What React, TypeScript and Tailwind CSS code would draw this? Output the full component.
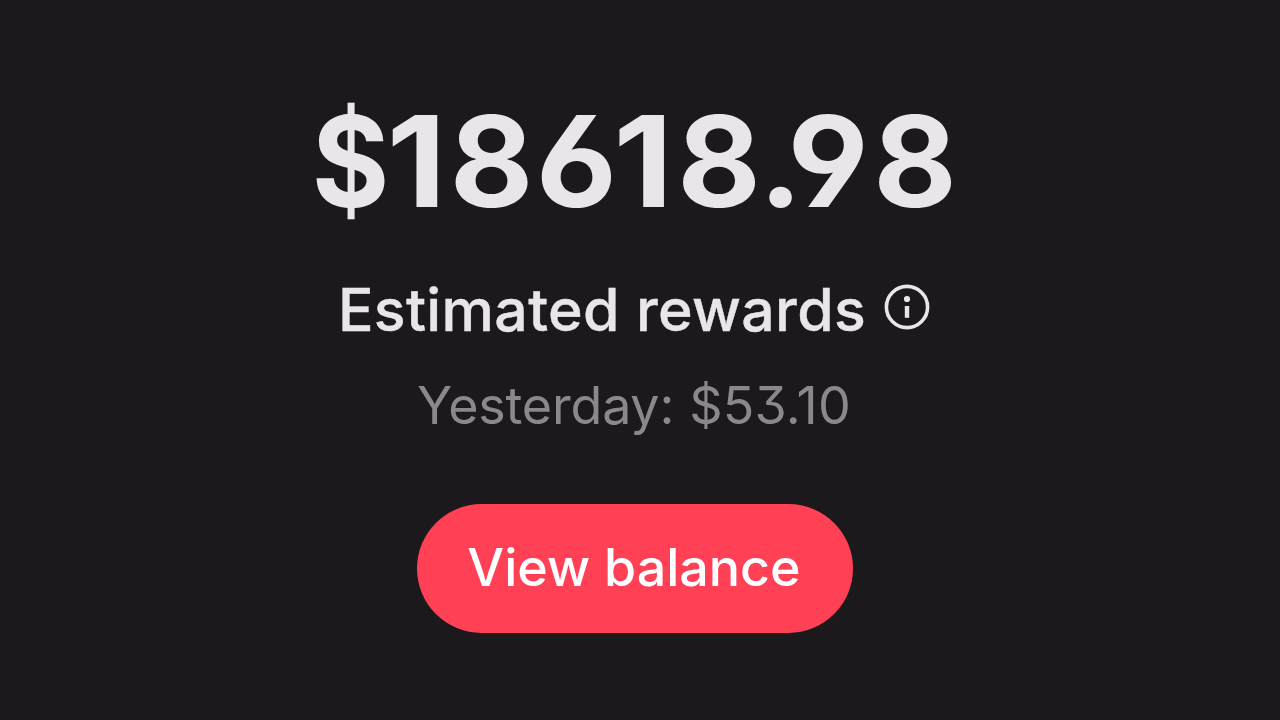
const digits = [
  { glyph: "$", cell: "w-[73px]", shape: "scale-x-[0.94]" },
  { glyph: "1", cell: "w-[59px]", shape: "scale-x-110" },
  { glyph: "8", cell: "w-[91px]", shape: "scale-x-[1.02]" },
  { glyph: "6", cell: "w-[79px]", shape: "scale-x-105" },
  { glyph: "1", cell: "w-[54px]", shape: "scale-x-110" },
  { glyph: "8", cell: "w-[98px]", shape: "scale-x-[1.02]" },
  { glyph: ".9", cell: "w-[97px]", shape: "-ml-[7px] mr-[5px] scale-x-105 tracking-[-8px]" },
  { glyph: "8", cell: "w-[104px]", shape: "scale-x-[1.02]" },
];

export default function App() {
  return (
    <main className="flex h-[720px] w-[1280px] flex-col items-center overflow-hidden bg-[#1b191c] pt-[88px] pr-[10px] font-['Inter',sans-serif]">
      <h1 className="ml-[10px] flex h-[145px] items-center whitespace-nowrap text-[126px] font-bold leading-none text-[#e9e6ea] [font-feature-settings:'cv03','cv04']">
        {digits.map(({ glyph, cell, shape }, i) => (
          <span key={i} className={`flex shrink-0 justify-center ${cell} ${shape}`}>
            {glyph}
          </span>
        ))}
      </h1>
      <div className="mt-[38px] -ml-[2px] flex h-[76px] items-center gap-[18px] text-[#e9e6ea]">
        <span className="whitespace-nowrap text-[59px] font-medium leading-none tracking-[0.35px] [-webkit-text-stroke:0.4px_currentColor]">
          Estimated rewards
        </span>
        <svg className="-mt-[5px] size-[46px]" viewBox="0 0 46 46" fill="none">
          <circle cx="23" cy="23" r="20.6" stroke="currentColor" strokeWidth="3.6" />
          <circle cx="23" cy="15" r="3.1" fill="currentColor" />
          <path d="M23 22v11.8" stroke="currentColor" strokeWidth="4.4" />
        </svg>
      </div>
      <p className="mt-[23px] -ml-[2px] flex h-[72px] items-center whitespace-nowrap text-[52px] leading-none text-[#8a888b] [font-feature-settings:'cv09']">
        <span className="tracking-[-0.2px]">Yesterday:</span>
        <span className="ml-[15px] tracking-[0.2px]">$53.10</span>
      </p>
      <button className="mt-[62px] flex h-[129px] w-[436px] shrink-0 items-center justify-center whitespace-nowrap rounded-full bg-[#ff4055] pr-[2px] pb-[2px] text-[52px] font-medium leading-none text-white">
        View balance
      </button>
    </main>
  );
}
